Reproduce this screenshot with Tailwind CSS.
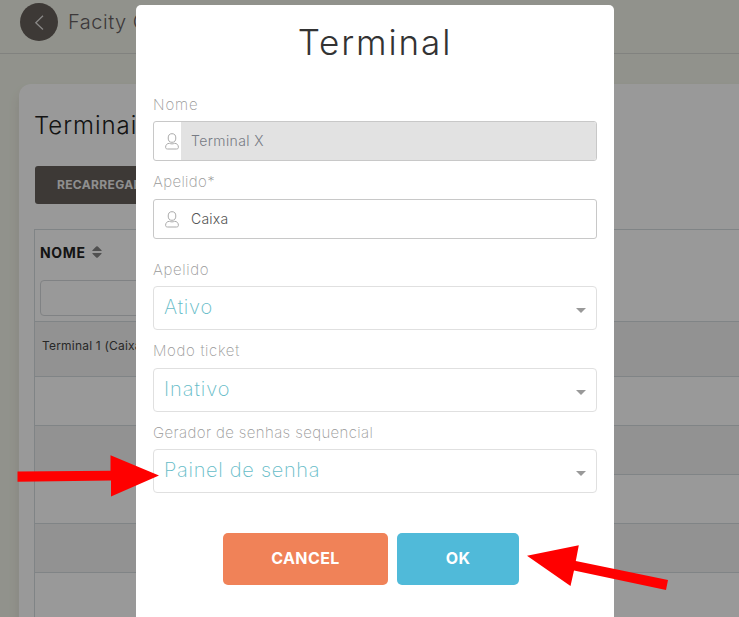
<!DOCTYPE html>
<html lang="pt">
<head>
<meta charset="utf-8">
<title>Terminal</title>
<script src="https://cdn.jsdelivr.net/npm/@tailwindcss/browser@4"></script>
</head>
<body class="relative h-[617px] w-[739px] overflow-hidden bg-[#f2f4e9] font-['Inter','Liberation_Sans',sans-serif]">
<div class="flex h-[617px] flex-col overflow-hidden">
  <header class="flex h-[54px] shrink-0 items-start border-b border-[#d8d9d4] pl-5 pt-[3px]">
    <div class="flex size-[38px] items-center justify-center rounded-full bg-[#665f5a]">
      <svg class="size-[38px]" viewBox="0 0 38 38" fill="none" stroke="#e4e2e0" stroke-width="1.3"><path d="M23 12.8L15.8 19.7L23 26.5"/></svg>
    </div>
    <span class="ml-2.5 whitespace-nowrap text-[20px] font-[350] leading-[38px] tracking-[0.5px] text-[#665f63]">Facity Gestão</span>
  </header>
  <main class="ml-[19px] mt-[30px] flex-1 rounded-tl-xl bg-white pl-[15px] shadow-[0_8px_12px_rgba(90,60,60,0.12)]">
    <h2 class="h-[82px] whitespace-nowrap pt-[27px] text-[24px] font-light leading-[30px] tracking-[0.95px] text-[#222]">Terminais</h2>
    <div class="ml-px flex h-[38px] w-[140px] items-center whitespace-nowrap rounded-[3px] bg-[#665f5a] pl-[22px] text-[12px] font-bold tracking-[0.35px] text-[#eee]">RECARREGAR</div>
    <div class="mt-[25px] border-l border-t border-[#d6dce0]">
      <div class="h-[92px] border-b border-[#d6dce0] pl-[5px] pt-[12px]">
        <div class="flex h-[20px] items-center gap-[6px] text-[14px] font-bold tracking-[0.7px] text-[#222]">NOME
          <svg class="h-3 w-[10px]" viewBox="0 0 10 12" fill="#858585"><path d="M.8 5Q0 5 .5 4.2L4.2.5Q5 0 5.8.5L9.5 4.2Q10 5 9.2 5ZM.8 7Q0 7 .5 7.8L4.2 11.5Q5 12 5.8 11.5L9.5 7.8Q10 7 9.2 7Z"/></svg>
        </div>
        <div class="mt-[18px] h-9 w-[160px] rounded-[4px] border border-[#d6d9dc]"></div>
      </div>
      <div class="h-[55px] whitespace-nowrap border-b border-[#d6dce0] bg-[#f3f3f3] pl-[7px] pt-[14px] text-[12px] leading-5 tracking-[0.2px] text-[#444]">Terminal 1 (Caixa)</div>
      <div class="h-[49px] border-b border-[#d6dce0]"></div>
      <div class="h-[49px] border-b border-[#d6dce0] bg-[#f3f3f3]"></div>
      <div class="h-[49px] border-b border-[#d6dce0]"></div>
      <div class="h-[49px] border-b border-[#d6dce0] bg-[#f3f3f3]"></div>
      <div class="h-[60px]"></div>
    </div>
  </main>
</div>

<div class="absolute inset-0 flex items-start bg-black/40 pl-[136px] pt-[5px]">
  <div class="h-[630px] w-[478px] rounded-[5px] bg-white px-[17px]">
    <h1 class="h-[90px] pt-[15px] text-center text-[35px] font-light leading-[44px] tracking-[1.9px] text-[#333]">Terminal</h1>
    <label class="block h-[26px] text-[15px] font-extralight leading-5 tracking-[0.9px] text-[#999]">Nome</label>
    <div class="flex h-10 items-center overflow-hidden rounded-[3px] border border-[#c8c8c8]">
      <div class="flex h-full w-[27px] items-center justify-end pr-[2px]">
        <svg class="h-[17px] w-[14px]" viewBox="0 0 14 17" fill="none" stroke="#aaa" stroke-width="1"><ellipse cx="7" cy="5" rx="3.8" ry="4.3"/><path d="M4.5 10.3C2 10.3.6 12 .6 14.3C.6 15.6 1.4 16 2.5 16H11.5C12.6 16 13.4 15.6 13.4 14.3C13.4 12 12 10.3 9.5 10.3C7.8 11.1 6.2 11.1 4.5 10.3Z"/></svg>
      </div>
      <div class="flex h-full flex-1 items-center bg-[#e2e2e2] pb-px pl-[10px] text-[14px] font-[350] tracking-[0.4px] text-[#777b84]">Terminal X</div>
    </div>
    <label class="mt-[11px] block h-[27px] text-[15px] font-extralight leading-5 tracking-[0.35px] text-[#999]">Apelido*</label>
    <div class="flex h-10 items-center overflow-hidden rounded-[3px] border border-[#c8c8c8]">
      <div class="flex h-full w-[27px] items-center justify-end pr-[2px]">
        <svg class="h-[17px] w-[14px]" viewBox="0 0 14 17" fill="none" stroke="#aaa" stroke-width="1"><ellipse cx="7" cy="5" rx="3.8" ry="4.3"/><path d="M4.5 10.3C2 10.3.6 12 .6 14.3C.6 15.6 1.4 16 2.5 16H11.5C12.6 16 13.4 15.6 13.4 14.3C13.4 12 12 10.3 9.5 10.3C7.8 11.1 6.2 11.1 4.5 10.3Z"/></svg>
      </div>
      <div class="flex h-full flex-1 items-center pb-px pl-[10px] text-[14px] font-[350] tracking-[0.2px] text-[#555]">Caixa</div>
    </div>
    <label class="mt-[21px] block h-[26px] text-[15px] font-extralight leading-5 tracking-[0.65px] text-[#999]">Apelido</label>
    <div class="flex h-11 items-center justify-between rounded-[4px] border border-[#e0e0e0] pl-[10px] pr-[10px] text-[20px] font-extralight leading-10 tracking-[0.75px] text-[#66bcc8]"><span class="-mt-[3px]">Ativo</span>
      <svg class="mt-[5px] h-[5px] w-[10px]" viewBox="0 0 10 5" fill="#999"><path d="M0 0H10L5 5Z"/></svg></div>
    <label class="mt-[11px] block h-[27px] text-[15px] font-extralight leading-5 tracking-[0.65px] text-[#999]">Modo ticket</label>
    <div class="flex h-11 items-center justify-between rounded-[4px] border border-[#e0e0e0] pl-[10px] pr-[10px] text-[20px] font-extralight leading-10 tracking-[0.95px] text-[#66bcc8]"><span class="-mt-[3px]">Inativo</span>
      <svg class="mt-[5px] h-[5px] w-[10px]" viewBox="0 0 10 5" fill="#999"><path d="M0 0H10L5 5Z"/></svg></div>
    <label class="mt-[11px] block h-[26px] text-[15px] font-extralight leading-5 tracking-[0.38px] text-[#999]">Gerador de senhas sequencial</label>
    <div class="flex h-11 items-center justify-between rounded-[4px] border border-[#e0e0e0] pl-[10px] pr-[10px] text-[20px] font-extralight leading-10 tracking-[0.7px] text-[#66bcc8]"><span class="-mt-[3px]">Painel de senha</span>
      <svg class="mt-[5px] h-[5px] w-[10px]" viewBox="0 0 10 5" fill="#999"><path d="M0 0H10L5 5Z"/></svg></div>
    <div class="mt-10 flex gap-[9px] pl-[70px] text-[16px] font-bold tracking-[0.4px] text-white">
      <button class="h-[52px] w-[165px] rounded-[5px] bg-[#f08258] pb-[2px]">CANCEL</button>
      <button class="h-[52px] w-[122px] rounded-[5px] bg-[#50bad9] pb-[2px]">OK</button>
    </div>
  </div>
</div>
<svg class="pointer-events-none absolute inset-0 h-[617px] w-[739px]" viewBox="0 0 739 617" fill="#f00">
  <path d="M17.5 471.5L110.5 470.7V455.2L159 475.5L111 496.5V480.5L17.5 481.8Z"/>
  <path d="M527 555.8L578.8 545.3L575.8 561L668 580L666 590L574 570.5L570.5 586Z"/>
</svg>
</body>
</html>
